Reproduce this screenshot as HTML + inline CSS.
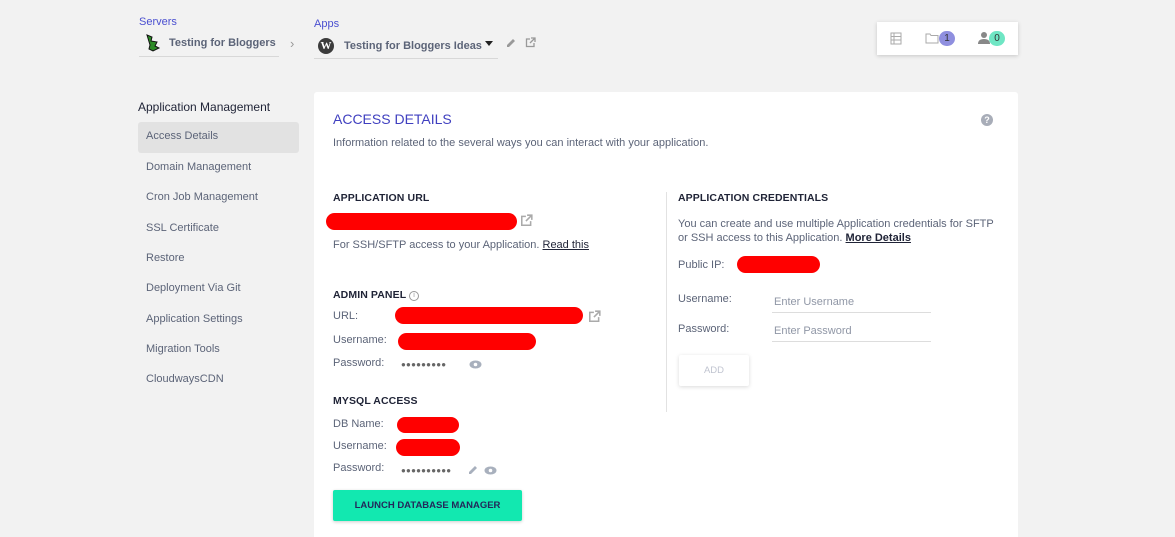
<!DOCTYPE html>
<html><head><meta charset="utf-8"><style>
*{margin:0;padding:0;box-sizing:border-box}
html,body{width:1175px;height:537px;overflow:hidden}
body{background:#f2f2f2;font-family:"Liberation Sans",sans-serif;position:relative;color:#555b6e}
.a{position:absolute;white-space:nowrap}
.s{font-size:11px;color:#5c6478}
.h{font-size:10.5px;font-weight:bold;color:#1f2336;letter-spacing:.1px}
.red{position:absolute;background:#ff0000;border-radius:9px}
.nav{position:absolute;left:146px;font-size:11px;color:#5c6478}
.dots{font-size:8px;color:#666;letter-spacing:0.2px}
</style></head><body>
<div class="a" style="left:139px;top:16px;font-size:11px;color:#4a4fd0">Servers</div>
<div class="a" style="left:145px;top:34px;width:14px;height:17px"><svg width="16" height="18" viewBox="0 0 16 18"><path d="M2 1 L7 3 L6 7 L12 8 L10 12 L14 14 L8 17 L4 15 L5 11 Z" fill="#2c8a25" stroke="#111" stroke-width="1"/></svg></div>
<div class="a" style="left:169px;top:37px;font-size:11px;font-weight:bold;color:#5c6478;width:107px;overflow:hidden">Testing for Bloggers Ideas</div>
<div class="a" style="left:139px;top:56px;width:140px;height:1px;background:#d8d8d8"></div>
<div class="a" style="left:290px;top:36px;font-size:13px;color:#999">›</div>
<div class="a" style="left:314px;top:18px;font-size:11px;color:#4a4fd0">Apps</div>
<div class="a" style="left:318px;top:38px;width:16px;height:16px;border-radius:50%;background:#3c3c3c;color:#fff;font-size:11px;font-weight:bold;text-align:center;line-height:16px;font-family:'Liberation Serif',serif">W</div>
<div class="a" style="left:344px;top:40px;font-size:11px;font-weight:bold;color:#5c6478">Testing for Bloggers Ideas</div>
<div class="a" style="left:485px;top:41px;width:0;height:0;border-left:4px solid transparent;border-right:4px solid transparent;border-top:5px solid #222"></div>
<div class="a" style="left:314px;top:58px;width:184px;height:1px;background:#d8d8d8"></div>
<svg class="a" style="left:506px;top:38px" width="10" height="10" viewBox="0 0 10 10"><path d="M1 9 L1 7 L7 1 L9 3 L3 9 Z" fill="#999"/></svg>
<svg class="a" style="left:525px;top:37px" width="11" height="11" viewBox="0 0 11 11"><path d="M5 2H1.5V9.5H9V6" fill="none" stroke="#999" stroke-width="1.3"/><path d="M6 1H10V5M10 1L5 6" fill="none" stroke="#999" stroke-width="1.3"/></svg>
<div class="a" style="left:877px;top:22px;width:141px;height:33px;background:#fff;box-shadow:0 1px 4px rgba(0,0,0,.18)"></div>
<svg class="a" style="left:890px;top:32px" width="12" height="13"><rect x="1" y="1" width="10" height="11" fill="none" stroke="#aaa"/><path d="M1 4.5H11M1 8H11M4 1V12" stroke="#aaa"/></svg>
<svg class="a" style="left:925px;top:33px" width="14" height="11"><path d="M1 1H5L6 2.5H13V10H1Z" fill="none" stroke="#aaa"/></svg>
<div class="a" style="left:939px;top:31px;width:16px;height:15px;border-radius:8px;background:#8f8fdf;color:#333;font-size:10px;text-align:center;line-height:15px">1</div>
<svg class="a" style="left:978px;top:31px" width="12" height="14"><circle cx="6" cy="4" r="3" fill="#888"/><path d="M0 13 Q0 8 6 8 Q12 8 12 13Z" fill="#888"/></svg>
<div class="a" style="left:989px;top:31px;width:16px;height:15px;border-radius:8px;background:#6fe6c4;color:#333;font-size:10px;text-align:center;line-height:15px">0</div>

<div class="a" style="left:138px;top:100px;font-size:12px;color:#1f2336">Application Management</div>
<div class="a" style="left:138px;top:122px;width:161px;height:31px;background:#e2e2e2;border-radius:3px"></div>
<div class="nav" style="top:130px">Access Details</div>
<div class="nav" style="top:161px">Domain Management</div>
<div class="nav" style="top:191px">Cron Job Management</div>
<div class="nav" style="top:222px">SSL Certificate</div>
<div class="nav" style="top:252px">Restore</div>
<div class="nav" style="top:282px">Deployment Via Git</div>
<div class="nav" style="top:313px">Application Settings</div>
<div class="nav" style="top:343px">Migration Tools</div>
<div class="nav" style="top:373px">CloudwaysCDN</div>

<div class="a" style="left:314px;top:92px;width:704px;height:445px;background:#fff;border-radius:3px 3px 0 0"></div>
<div class="a" style="left:333px;top:111px;font-size:14px;color:#4040c0">ACCESS DETAILS</div>
<div class="a" style="left:981px;top:114px;width:12px;height:12px;border-radius:50%;background:#a8adb8;color:#fff;font-size:9px;font-weight:bold;text-align:center;line-height:12px">?</div>
<div class="a s" style="left:333px;top:137px">Information related to the several ways you can interact with your application.</div>

<div class="a h" style="left:333px;top:192px">APPLICATION URL</div>
<div class="red" style="left:326px;top:213px;width:191px;height:17px"></div>
<svg class="a" style="left:520px;top:214px" width="13" height="13" viewBox="0 0 11 11"><path d="M5 2H1.5V9.5H9V6" fill="none" stroke="#aaa" stroke-width="1.3"/><path d="M6 1H10V5M10 1L5 6" fill="none" stroke="#aaa" stroke-width="1.3"/></svg>
<div class="a s" style="left:333px;top:239px">For SSH/SFTP access to your Application. <span style="color:#1f2336;text-decoration:underline">Read this</span></div>

<div class="a h" style="left:333px;top:289px">ADMIN PANEL <span style="display:inline-block;width:10px;height:10px;border:1px solid #999;border-radius:50%;font-size:7px;color:#999;text-align:center;line-height:8px;font-weight:normal;vertical-align:1px">i</span></div>
<div class="a s" style="left:333px;top:310px">URL:</div>
<div class="red" style="left:395px;top:307px;width:188px;height:17px"></div>
<svg class="a" style="left:588px;top:310px" width="13" height="13" viewBox="0 0 11 11"><path d="M5 2H1.5V9.5H9V6" fill="none" stroke="#aaa" stroke-width="1.3"/><path d="M6 1H10V5M10 1L5 6" fill="none" stroke="#aaa" stroke-width="1.3"/></svg>
<div class="a s" style="left:333px;top:334px">Username:</div>
<div class="red" style="left:398px;top:333px;width:138px;height:17px"></div>
<div class="a s" style="left:333px;top:357px">Password:</div>
<div class="a dots" style="left:401px;top:360px">●●●●●●●●●</div>
<svg class="a" style="left:469px;top:360px" width="13" height="9"><ellipse cx="6.5" cy="4.5" rx="6" ry="4" fill="#a8b0bd"/><circle cx="6.5" cy="4.5" r="1.8" fill="#fff"/></svg>

<div class="a h" style="left:333px;top:395px">MYSQL ACCESS</div>
<div class="a s" style="left:333px;top:418px">DB Name:</div>
<div class="red" style="left:397px;top:417px;width:62px;height:16px"></div>
<div class="a s" style="left:333px;top:440px">Username:</div>
<div class="red" style="left:396px;top:439px;width:64px;height:17px"></div>
<div class="a s" style="left:333px;top:462px">Password:</div>
<div class="a dots" style="left:401px;top:466px">●●●●●●●●●●</div>
<svg class="a" style="left:468px;top:465px" width="10" height="10" viewBox="0 0 10 10"><path d="M1 9 L1 7 L7 1 L9 3 L3 9 Z" fill="#a8b0bd"/></svg>
<svg class="a" style="left:484px;top:466px" width="13" height="9"><ellipse cx="6.5" cy="4.5" rx="6" ry="4" fill="#a8b0bd"/><circle cx="6.5" cy="4.5" r="1.8" fill="#fff"/></svg>
<div class="a" style="left:333px;top:490px;width:189px;height:31px;background:#12e8b0;border-radius:2px;box-shadow:0 1px 3px rgba(0,0,0,.2);font-size:9.5px;font-weight:bold;color:#23285a;text-align:center;line-height:31px">LAUNCH DATABASE MANAGER</div>

<div class="a" style="left:666px;top:192px;width:1px;height:220px;background:#e2e2e2"></div>
<div class="a h" style="left:678px;top:192px">APPLICATION CREDENTIALS</div>
<div class="a s" style="left:678px;top:217px;line-height:14px">You can create and use multiple Application credentials for SFTP<br>or SSH access to this Application. <span style="color:#1f2336;text-decoration:underline;font-weight:bold">More Details</span></div>
<div class="a s" style="left:678px;top:259px">Public IP:</div>
<div class="red" style="left:737px;top:256px;width:83px;height:17px"></div>
<div class="a s" style="left:678px;top:293px">Username:</div>
<div class="a s" style="left:774px;top:296px;color:#9097a6">Enter Username</div>
<div class="a" style="left:772px;top:312px;width:159px;height:1px;background:#ddd"></div>
<div class="a s" style="left:678px;top:323px">Password:</div>
<div class="a s" style="left:774px;top:325px;color:#9097a6">Enter Password</div>
<div class="a" style="left:772px;top:341px;width:159px;height:1px;background:#ddd"></div>
<div class="a" style="left:679px;top:355px;width:70px;height:31px;background:#fff;border-radius:2px;box-shadow:0 1px 4px rgba(0,0,0,.15);font-size:9.5px;color:#c0c4d0;text-align:center;line-height:31px">ADD</div>
</body></html>
